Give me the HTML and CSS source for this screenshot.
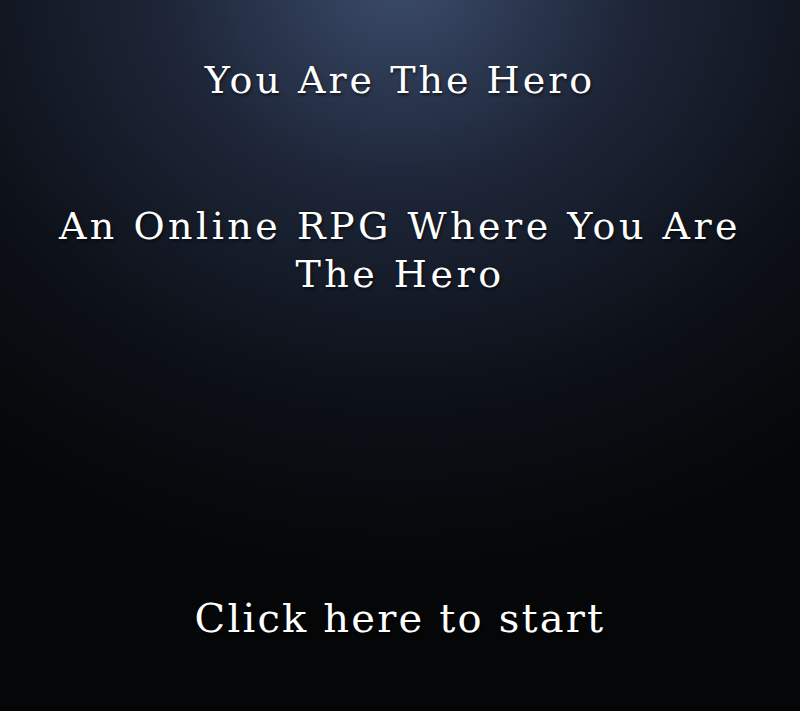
FILE: index.html
```html
<!DOCTYPE html>
<html>
<head>
<meta charset="utf-8">
<link rel="stylesheet" href="styles.css">
</head>
<body>
<main class="screen">
  <h1 class="title">You Are The Hero</h1>
  <h2 class="subtitle">An Online RPG Where You Are The Hero</h2>
  <div class="spacer"></div>
  <a class="start">Click here to start</a>
</main>
</body>
</html>
```
FILE: styles.css
```css
html, body {
  margin: 0;
  padding: 0;
  height: 100%;
}
body {
  background: #050607;
}
.screen {
  height: 711px;
  box-sizing: border-box;
  display: flex;
  flex-direction: column;
  align-items: center;
  text-align: center;
  color: #ffffff;
  font-family: "DejaVu Serif", serif;
  background: radial-gradient(ellipse 680px 600px at 400px -20px, #3b4b6a 0%, #1d2537 35%, #0c1017 70%, #050607 100%);
  padding-top: 56px;
}
.title {
  margin: 0;
  font-weight: normal;
  font-size: 38px;
  line-height: 48px;
  letter-spacing: 3px;
  text-shadow: 1px 2px 3px rgba(0,0,0,0.6);
}
.subtitle {
  margin: 98px 0 0;
  width: 720px;
  font-weight: normal;
  font-size: 38px;
  line-height: 48px;
  letter-spacing: 3.5px;
  text-shadow: 1px 2px 3px rgba(0,0,0,0.6);
}
.spacer { flex: 1; }
.start {
  font-size: 40px;
  line-height: 50px;
  letter-spacing: 2.2px;
  margin-bottom: 68px;
  cursor: pointer;
  text-shadow: 1px 2px 3px rgba(0,0,0,0.6);
}
```
